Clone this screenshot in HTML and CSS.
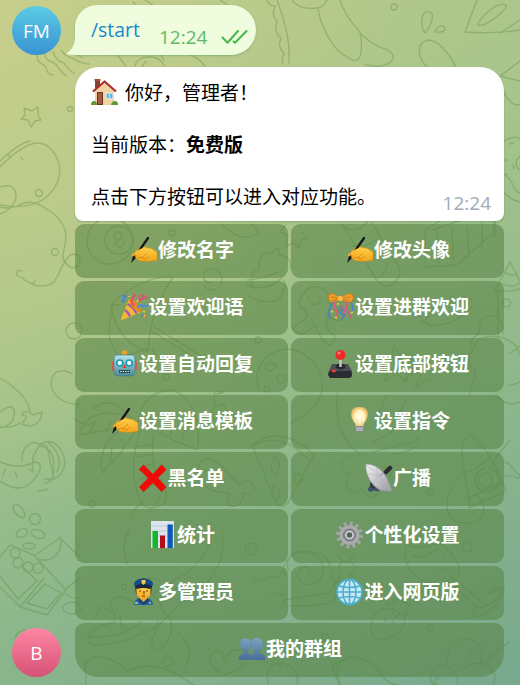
FILE: index.html
```html
<!DOCTYPE html>
<html lang="zh-CN">
<head>
<meta charset="utf-8">
<title>Chat</title>
<link rel="stylesheet" href="styles.css">
</head>
<body>
<svg width="0" height="0" class="defs" aria-hidden="true">
  <defs>
    <linearGradient id="skin" x1="0" y1="0" x2="0" y2="1"><stop offset="0" stop-color="#ffd04a"/><stop offset="1" stop-color="#f3a51c"/></linearGradient>
    <linearGradient id="steel" x1="0" y1="0" x2="1" y2="1"><stop offset="0" stop-color="#f4f4f6"/><stop offset="1" stop-color="#96979d"/></linearGradient>
    <linearGradient id="robotFace" x1="0" y1="0" x2="0" y2="1"><stop offset="0" stop-color="#b8e4ec"/><stop offset="1" stop-color="#4c8994"/></linearGradient>
    <linearGradient id="people" x1="0" y1="0" x2="0" y2="1"><stop offset="0" stop-color="#7ba4bf"/><stop offset="1" stop-color="#496b9b"/></linearGradient>
    <radialGradient id="glow"><stop offset="0" stop-color="#fffef2"/><stop offset=".6" stop-color="#fff2c0"/><stop offset="1" stop-color="#eebd62"/></radialGradient>
    <symbol id="writing" viewBox="0 0 28 28">
      <path fill="url(#skin)" stroke="#d88c16" stroke-width=".6" d="M3 18 9 12q3-2 6-1l4 1q3 0 5 2l3 2v8q-7 2-14 1-5 0-6-2l-5-3q-1-1 1-2z"/>
      <path fill="none" stroke="#cf8517" stroke-width=".8" d="m4 18 6-2 5-3m-8 9 6-1 4-4m-5 5 4 1 3-3"/>
      <path stroke="#17191a" stroke-width="2.3" stroke-linecap="round" d="M18 2 9 15"/><path stroke="#17191a" stroke-width="1.4" d="m9 15-5 6"/>
      <path fill="#17191a" d="m3 20-2 7 5-5z"/><path fill="url(#skin)" d="m4 18 6-5 4-1 2 2-6 4-4 3z"/>
    </symbol>
    <symbol id="party" viewBox="0 0 28 28">
      <path fill="#f7b735" d="M9 6q8 3 12 13L2 27q-1 0-1-1z"/>
      <path fill="none" stroke="#9d55ba" stroke-width="2.2" d="M7.500 11q6 3 9 9.500M5 17q3 2 5 6.200"/>
      <ellipse cx="15" cy="12.500" rx="3.200" ry="8.500" transform="rotate(-42 15 12.500)" fill="#e08b20"/>
      <path fill="none" stroke="#e84b70" stroke-width="2.2" d="M14 13q-4-5-1-8 3-3 0-4m6 8q1-3 3-3 2-1 2-4"/>
      <path fill="none" stroke="#4a8de5" stroke-width="2" d="M18 15q1-4 5-2 3 1 5-1M2 2l2 2-1 2 3 1"/>
      <path stroke="#e84b70" stroke-width="1.700" d="m20 2 2 1m3 3 3-2M25 23l1 2M20 6l-2-2"/>
      <path stroke="#f7c23c" stroke-width="1.700" d="m17 9 1-2m5 11 2 1m-1 5 1-2M9 3v1"/>
      <path stroke="#3974cc" stroke-width="1.500" d="m5 2 1 2m-4 4 2 1m18 13 1 1"/>
    </symbol>
    <symbol id="robot" viewBox="0 0 28 28">
      <path stroke="#a55022" stroke-width="2" d="M13.500 3v4"/><circle cx="13.500" cy="2.800" r="2.500" fill="#f2a127"/>
      <rect x="1" y="11" width="3" height="10" rx="1.400" fill="#d85b50"/><rect x="23" y="11" width="3" height="10" rx="1.400" fill="#d85b50"/>
      <path fill="url(#robotFace)" stroke="#487e88" stroke-width=".7" d="M6 5h15q3 0 3 3v14q0 4-4 4H7q-4 0-4-4V8q0-3 3-3z"/>
      <g fill="#f4ffff" stroke="#189cb7" stroke-width="1.700"><circle cx="8.800" cy="13" r="3"/><circle cx="18.200" cy="13" r="3"/></g>
      <path fill="#db3e36" d="m13.500 14 2 4h-4z"/><path stroke="#244d56" stroke-width="3" d="M8 21.500h11"/><path stroke="#d6eff0" stroke-width="1.200" stroke-dasharray="1.500 1" d="M9 21.500h9"/>
    </symbol>
    <symbol id="cross" viewBox="0 0 28 28"><path fill="#f00b0b" d="m4.500 .500 9.500 9.500 8.500-9.500 5 5-8.500 8.500 8.500 9-5 5-8.500-9-9.500 9-4.500-5 9-9-9-8.500z"/></symbol>
    <symbol id="chart" viewBox="0 0 28 28"><path fill="#dce4ec" d="M2 0h23v27H2z"/><path stroke="#b2bdca" stroke-width=".6" d="M2 5h23M2 10h23M2 15h23M2 20h23"/><path fill="#14b72c" d="M3.500 10H9v17H3.500z"/><path fill="#b40d19" d="M11 14.500h5V27h-5z"/><path fill="#0b57bd" d="M18.500 3.500h5.300V27h-5.300z"/></symbol>
    <symbol id="officer" viewBox="0 0 28 28">
      <path fill="#2462a3" d="M4 27q0-6 6-7h7q6 1 6 7z"/><path fill="#e9a922" d="M10 17h7v5l-3.500 3L10 22z"/><path fill="#174372" d="m9 20 4.500 4 4.500-4 1 3-5.500 4L8 23z"/>
      <path fill="#482d1a" d="M5 8h17l-1 8H6z"/><path fill="url(#skin)" d="M6.500 9h14v6q-1 6-7 6t-7-6z"/>
      <path fill="#174a86" d="M4 7q-1-5 9.500-7Q24 2 23 7l-2 3H6z"/><path fill="#17293e" d="M5 8q8-4 17 0l-2 3q-7-2-13 0z"/><path fill="#f3cd42" d="M11.500 2h4v3l-2 2-2-2z"/>
      <path fill="none" stroke="#573a1e" stroke-width="1.100" d="M9 13h2m5 0h2m-4 0v3m-2 2h3"/><path stroke="#f4c737" stroke-width="1.300" d="M5 25h3m12-1v2"/>
    </symbol>
    <symbol id="ribbons" viewBox="0 0 28 28">
      <path fill="none" stroke="#477fd6" stroke-width="1.800" d="M7 8q-7 8-4 18"/><path fill="none" stroke="#e0577d" stroke-width="1.700" d="M9 8q-4 6 0 9 3 3 0 8m10-18 1 9 4 9M15 12l-1 4 4 1-2 5"/>
      <path fill="none" stroke="#4c83cf" stroke-width="1.500" d="m12 14 4 3-3 3 5 2-3 4m8-18q4 5 2 12"/>
      <path fill="#ed9c28" stroke="#bd711c" stroke-width=".6" d="M13 5Q7-1 2 1q-2 5 1 8 6 1 10-3zm1 0q6-6 11-4 3 5-1 8-6 1-10-3z"/><path stroke="#c87922" stroke-width=".8" d="m4 4 8 1m3 0 8-1m-12 2-6 2m11-2 6 2"/><rect x="10.800" y="3" width="5" height="5" rx="1.800" fill="#ffb847"/>
      <path stroke="#f3cc43" stroke-width="1.500" d="m4 18 2 1m2 5 2 1m14-5 2-1M11 10v2"/>
    </symbol>
    <symbol id="joystick" viewBox="0 0 28 28"><path fill="#4b5057" d="M5 14h16l4 7v6H2v-6z"/><path fill="#292c31" d="M2 21h22l1 4-2 3H3l-2-3z"/><ellipse cx="13.500" cy="16.500" rx="5" ry="3" fill="#26292e"/><path stroke="#c5c7cb" stroke-width="2.400" d="M13.500 9v8"/><circle cx="13.500" cy="5" r="5" fill="#ed2825"/><circle cx="12" cy="3" r="1.500" fill="#ff8176"/><ellipse cx="6.800" cy="21" rx="2.400" ry="1.400" fill="#e33a35"/></symbol>
    <symbol id="bulb" viewBox="0 0 28 28"><path fill="url(#glow)" stroke="#e0b66d" stroke-width=".5" d="M13.500 0C2 0 5 12 9 16l1 4h7l1-4c4-4 7-16-4.500-16z"/><path fill="none" stroke="#f2cf8d" stroke-width=".7" d="m11 12 1 7m4-7-1 7"/><path fill="#858b91" d="M9.800 19h7.400v5l-2 2h-3.400l-2-2z"/><path stroke="#d0d4d8" d="M10 21h7m-7 2h7"/></symbol>
    <symbol id="dish" viewBox="0 0 28 28"><path fill="#30363e" d="m6 15 7 6v5H3l2-4z"/><ellipse cx="6" cy="25.500" rx="3" ry="2" fill="#40536c"/><ellipse cx="12" cy="25.500" rx="2.500" ry="2" fill="#40536c"/><path fill="url(#steel)" stroke="#92939a" stroke-width=".6" d="M1 0q18 0 26 27-14 2-21-9Q0 9 1 0z"/><path fill="none" stroke="#b4b5bb" stroke-width=".7" d="M2 2q13 7 23 24M3 10q11-2 17 14M12 4q2 10-4 15"/><path stroke="#a4a5a9" stroke-width="1.500" d="m14 12 9-6"/><path stroke="#2a2d32" stroke-width="4.500" stroke-linecap="round" d="m21 8 4-4"/></symbol>
    <symbol id="gear" viewBox="0 0 28 28"><circle cx="13.500" cy="14" r="11.500" fill="none" stroke="#a4a5aa" stroke-width="4" stroke-dasharray="2.800 3.221"/><circle cx="13.500" cy="14" r="7.800" fill="none" stroke="#a9aaae" stroke-width="4.600"/><circle cx="13.500" cy="14" r="6" fill="#8d8f94" stroke="#6f7176" stroke-width="1"/><circle cx="13.500" cy="14" r="3.500" fill="#566054" stroke="#d4d5d8" stroke-width="1.500"/></symbol>
    <symbol id="globe" viewBox="0 0 28 28"><circle cx="13.500" cy="14" r="12.600" fill="#c4e9f4" stroke="#4baccc" stroke-width="1.600"/><g fill="none" stroke="#4baccc" stroke-width="1.500"><ellipse cx="13.500" cy="14" rx="6.500" ry="12.500"/><path d="M13.500 1v26M1 14h25M3 8q10.500 3 21 0M3 20q10.500-3 21 0"/></g></symbol>
    <symbol id="users" viewBox="0 0 28 28"><g fill="url(#people)"><path d="M19 3q6 0 6 6 0 4-3 6v3l5 3 .5 4H12l1-5 3-2v-3q-3-2-3-6 0-6 6-6z"/><path stroke="#718c75" stroke-width=".5" d="M7.500 3q6 0 6 6 0 4-3 6v3l5 3 .5 4H.5L1 21l4-3v-3q-3-2-3-6 0-6 5.500-6z"/></g></symbol>
    <symbol id="house" viewBox="0 0 28 28"><path fill="#854234" d="M4 1h5v8H4z"/><path fill="#b44b3b" d="M3.500 0h6v2h-6z"/><path fill="#f0d3a0" d="m4 12 9-8 10 8v14H4z"/><path fill="none" stroke="#aa2f2b" stroke-width="2.300" stroke-linejoin="round" d="M2 12.500 13.500 2.500 25 12.500"/><path fill="#6c3527" d="M6 13h6v13H6z"/><path fill="#a45a3e" d="M7 14h4v11H7z"/><path fill="#67b6e3" stroke="#fff0cf" d="M15 14h7v6h-7z"/><path stroke="#e4eff4" stroke-width=".7" d="M18.500 14v6"/><path fill="#5f9930" d="M0 26q0-4 3-4t3 4zm20 0q1-4 4-4t3 4z"/></symbol>
  </defs>
</svg>
<svg class="doodles" viewBox="0 0 520 685" aria-hidden="true">
  <!-- upper left -->
  <path d="M37 55q0 7 5 9 4 1 5 7 2 4 6 4M44 53q2 8 8 9 5 2 7 7l7 7M53 52q3 9 11 11 3 6 10 10M61 50q5 7 14 9 4 4 14 5M72 52l11 6M117 54l10 14m8-2q2-9 14-9t15 9m-22 1 4-6m14-7 4 6m10-8q22 0 33 17m-74-67 5 5M145 0l8 5m67-5 8 5"/>
  <path d="m24 108 8 3 6-4 0 8 3 5-6 1-4 6-3-7-7-1 4-4zM0 161q19-18 30-20m-30 26q20-21 36-24 13-1 21 15 6 14-1 27-14 27-56 20m0-18q16-5 16 10-2 12-16 17M0 207q12 3 21-3 11-5 24 4 19 11 21 27 0 9-3 19-1 9 9 14 8-1 8-8-1-8-10-5c-15 16-9 32-31 31q-5 0-8-3m4-2q-2 4-4 2-7-2-9-6-6 0-5-4 0-4 5-2M21 157l2 3M8 154l3 4"/>
  <circle cx="70" cy="109" r="2.500"/><circle cx="39" cy="193" r="3.500"/><circle cx="55" cy="252" r="3.500"/>
  <!-- upper right -->
  <path d="M267 0q2 6 8 6m0 1q-4 8 2 14-4 11 4 17-4 9 3 15-3 7-1 10m-6-63q14 37 12 63M292 0q6 10 25 8 7-1 10-8m-9 8c2 16 14 43 31 50 13 9 14-9 11-26-11-12-17-21-20-32m20 33c13 13 24 16 28 17 9 6 6 14-8 16-6 1-9-1-15-1M425 33c-6-9-3-24 4-21 7 0 2 14-4 21zm10-1c10 1 12-3 8-6-4-2-8 5-8 6zm-8 35C416 56 417 42 429 40q14 2 27 27M477 0l-12 32q30 2 55-2M478 25c-1-5 20-25 28-20 3 4-22 23-28 20zm22 8 20-13M500 76l20-15m-20 15 20 5m-16 11q6 14 16 13"/>
  <circle cx="394" cy="7" r="3"/><path d="M504 141q10-6 16-2m-16 35q5 3 9 11 3 8 7 8m-16 0q7 7 16 9m0-46q-8 9 0 14M509 144l4-1m-8 17h2m6 5 1 4m-9 5h2M367 68l-3 8m73-8 16 8"/>
  <!-- left column -->
  <path d="M0 378q29 17 30 35m0 0c-7-4-9 2-8 2 9 2 2 4 0 9 11 5 19-1 20-12-9 3-7 4-12 1zM0 412q10-8 14-3 3 15-14 19m20-5q-7 5-20 4M72 374q-6-5-16-2-8 9-3 19 8 14 27 13"/>
  <path d="M0 462q18 8 35 0 8 1 4 10-11 20-27 15-7-2-12-6m5-12-2 7m12-4 2 5m12-8 3 2m-10-9c-1-20 15-23 20-16m-4 45q8-1 10-2m-15-17c-3-19 7-30 14-26l6 28q0 8-8 9m-7-37q11-8 19-1c13 14 8 29-3 34h-10m-3-33c16 4 13 21 12 32m-4-35q15 13 8 29"/>
  <ellipse cx="19" cy="511" rx="4" ry="8" transform="rotate(-38 19 511)"/><circle cx="35" cy="519" r="5.500"/><ellipse cx="22" cy="533" rx="6" ry="4" transform="rotate(-24 22 533)"/><ellipse cx="38" cy="534" rx="7" ry="4" transform="rotate(18 38 534)"/><ellipse cx="29" cy="546" rx="6" ry="3"/>
  <circle cx="15" cy="553" r="5"/><circle cx="18" cy="563" r="5"/><circle cx="28" cy="567" r="5"/><circle cx="38" cy="568" r="5"/>
  <path d="m0 557 10-12 24 10 32 35-19 25-27-8-20-20m0-11 18 23 19-18-16-16m23 13-24 29m7-4 18-19 16 9-14 16zm7-47 26-18 20 19M36 558q13 6 21-4 6-8 3-17m6 52q10-9 14-10m-15 15q6 4 15 4"/><ellipse cx="72" cy="608" rx="9" ry="6"/>
  <path d="M25 630q-8 1-10 8"/>
  <!-- first rows -->
  <circle cx="110" cy="241" r="23"/><circle cx="119" cy="240" r="14"/><circle cx="118" cy="236" r="4"/><circle cx="120" cy="243" r="4"/><circle cx="172" cy="233" r="3"/><path d="M222 224q19 20 36 10 2-4-7-10m35 0-6 8 8 4-2 10 8-3 5 6 2-9 7-2-6-5M211 283q-10-1-7-10 5-7 14-2 8 9 1 16-10 7-15-2M111 304q33-29 62-27-13 20-21 46-3 14-4 28-28-7-36-40zm2 0-3 18q-4 21 10 35l28-8m6-22 59 36m-60-31 55 34M113 304l6 1m33 43 3 7m98-68q-5-13 6-19-1-17 14-15l3-5 3 2v5q14 2 11 13M247 280q14-1 32-8m-32 14q24 6 36-10m-35 19q12 10 31 5 8-13 5-20"/>
  <circle cx="74" cy="331" r="8"/><circle cx="258" cy="340" r="3"/><circle cx="166" cy="377" r="3"/><path d="M291 349q26 8 31 31 4 26-31 43M259 391c-8-24 8-42 32-42m-19 15q-6-4-6 4 3 6 8 1 5-6-2-5zm10 12q-5-3-5 4 4 6 8 0 2-5-3-4zm-14 11q-4-2-4 3 3 4 6 0 1-3-2-3z"/>
  <path d="m343 225 34 56q11 11 20-2 5-3 2-12l-29-47m-28 5q14 12 27-5m-17 26q13 3 25-7m10 25q-1 12-12 15m50-49 25-15 45-1-2 19-36 32-32 2zm7 0 36-12 23 1m-54 11 2 33m13-34 1 31m14-33 2 31m13-35v25m13-31v20M305 293c6-12 27-6 23 9l12 9q7 7-1 10l-12-4q-4 11 8 19 0 8-7 9-11-11-13-20l-10 8q-10 3-12-5l14-11-1-7q-13-4-3-15zm4 3v3m10-4v4m-8 5q7 2 10-4m-10 18 3 4m14-12-1 4M422 321l10 5q25-2 40-19m-48 15 14-20 34-3M394 345l6 11 13 1-9 9 4 15-12-7-11 8 3-14-9-9 13-2zM495 290l15-28 10 19m-25 9q11 3 25-1m-20-6q11 6 20 0m-15-10q9 4 12 0m-19 19v42M506 299a4 4 0 1 0 1 0M479 334c-1-25 26-24 24 0m-24 0q-12 6-6 17m1-3c4-20 44-12 45 6M473 351c-9 8-2 18 2 18 1 16-7 20-5 26m39-41q11-8 11-8m-11 40 11-4"/>
  <!-- palm, fish, melon -->
  <path d="M80 435q7-31 52-18m-52 18 56-10q-23-34-43-16m-4 24 6-9m11 8 5-10m17 4q-31 14-26 47l18-19 15-23m-23 16-2 17m11-25 3 9m14-27q6-31 35-31 29 12 25 60l-25-10-33-18m47 1-5 18m-8-23-4 18m-29-7q-9 24-7 47 4 28 12 31 10 3 19-5 4-9-4-18-12-20-7-52m-17 15 16-3m-16 13 16-3m-14 14 16-5m-14 16 17-7m-13 18 17-10m-18 21q-12 8-13 17m29-21-10 15m23-27q12-4 15 0M220 392q-9-3-4 13l-3 5q-3 10 6 11 10-2 7-12l-2-5m-7-10 7-2m-6 14 7-3M199 475c-5-19 14-24 28-2l13 12c3-7 14-5 14 5-5 8-11-1-11 6q-3 14-15 9l1-12q-26 0-30-18zm7-5v1m7 2 1 8M252 445q30-22 62 10l-26 48q-6 6-11 1zm0 1q28-16 55 12m-33-1q10 7 1 17-7-5-1-17zm0 28q11 8 2 16-7-7-2-16zm21-11q10-2 6 9-9 2-6-9z"/>
  <circle cx="92" cy="504" r="3"/><path d="M75 419q12 10 21 2M129 530q-9 13-2 34M222 530q5 28-14 52-14 8-45 39-8 9-27 15-13 7-31 8c-28 6-20-17 10-22 2-12-7-15-5-19 7-14 23-1 25 1l21-12 22-14q32-18 34-48M91 637q31 2 51-16m11-25q7 2 9 13l8 10c7 16-11 38-18 29-2-15 10-20 5-27m-62-3q5-18 16-5m9 3 1 11 8 2m30-49q-14-6-23 7"/><circle cx="251" cy="549" r="6"/><circle cx="124" cy="587" r="2.500"/><circle cx="168" cy="661" r="5"/><path d="M178 633q18 15 7 35M254 583c6-10 8 2 12-4 5-7 8 2 14-3m-7 19c5-6 7 3 12-1m-61 81q-22-12-10-23 8-5 10 9 9-17 20-9 11 12-20 23zM86 685v-10q-4-12 8-18 19-1 33 14 20-10 44 0l23 14"/>
  <!-- head, rocket, snail and ice cream -->
  <path d="M338 390q-7 43 24 66m-7 0c-17-3-17 19-4 17-12 15 3 26 11 15 5 17 22 7 15-2 15 0 19-18 6-19m-10-15 40-10q7-8 6-2-2 12-27 14m-18-29c19-1 38-26 30-25m-26 15 9-20m-14 47 13-6q11-6 12-17M470 508l-8-53q-1-13 8-21 22 17 36 57l-37 17zm-8-35q14-2 27-15m-22 41 34-17m-16-9a7 7 0 1 0 1 0m-1-5a12 12 0 1 0 4 0m-35 18c-9 6-10 28 1 35 21 8 35-6 26-22l-6-4m26-17c13-7 17 5 19-2-7-6-9-13-15-14m-13 0 18-22m-27 49 17-4"/>
  <circle cx="430" cy="492" r="3"/><circle cx="467" cy="547" r="5"/><path d="M285 576c-10-26 40-34 45-10l6 23q2 12-10 15-47 6-43-4l46-7 12-18q-4-9 0-12 8-4 14 3-1 7-6 10m-6-14-6-8m12 8 5-8m-66 16c-6-24 31-25 35-4 3 24-28 23-25 7 7-13 17-2 9 1M406 546c-5 31 22 40 42 37q15-5 10-19-14-25-42-34m-8 15q16 6 36-4m-32 15q12 4 27-8m-2 12 1 3m5-10 2 2m-8 15-3 2m10-3 3 1m-3 8 34 30m-29-33 34 28m4-9c12-9 22-10 15 0-8 22-37 31-27 14 12 0 25-8 27-19zM371 625c3-19 17-18 26-14l8 6c0 23-37 33-34 8zm20-15-6-6 9-1 4-8 5 7 8 2-7 7 5 5-9-3-4 5zm-7 9 2 3m7-2 1 4m-9 7 2 1"/>
  <circle cx="430" cy="628" r="3"/><circle cx="325" cy="637" r="3"/><path d="M341 685c-10-20 2-29 14-28 28 4 24 28 43 28m-52-26-14 6 7 20m7-19v1M447 666c-2-23 12-28 23-27 13 3 15 19 8 28m-44 18c-9-11-1-20 11-19 14 2 14 20 11 19m6-16c17-14 40 0 31 16m-3-28 19-15m-24 22 8-10m-23-3 3 4m-34 24q-5-3-4 5 7 3 6 5"/>
  <path d="M268 685q-4-22 13-22 20 4 16 22m-16-18-2-3"/>
  <path d="M496 395q12 13 24 7M404 381c5-7 17-15 18-8l-7 14 15-8m-16-9 8 1"/>
</svg>
<main class="chat">
  <section class="message-row outgoing">
    <div class="avatar avatar-fm">FM</div>
    <div class="bubble command">
      <svg class="tail" viewBox="0 0 18 24" aria-hidden="true"><path d="M9 0v8Q8 18 0 23q3 1 18 1z"/></svg>
      <span class="command-name">/start</span>
      <span class="time sent">12:24</span>
      <svg class="checks" viewBox="0 0 28 16" aria-hidden="true"><path d="m1.500 8.500 5 5.200L17 2m-4.500 10.500 1.500 1.200L25.500 2"/></svg>
    </div>
  </section>
  <section class="message-row incoming">
    <div class="avatar avatar-b">B</div>
    <div class="response">
      <article class="bubble welcome">
        <p><svg class="emoji"><use href="#house"/></svg><span class="greeting">你好，管理者！</span></p>
        <p>当前版本：<strong>免费版</strong></p>
        <p>点击下方按钮可以进入对应功能。</p>
        <span class="time received">12:24</span>
      </article>
      <div class="keyboard">
        <button><svg class="emoji"><use href="#writing"/></svg><span>修改名字</span></button>
        <button><svg class="emoji"><use href="#writing"/></svg><span>修改头像</span></button>
        <button><svg class="emoji"><use href="#party"/></svg><span>设置欢迎语</span></button>
        <button><svg class="emoji"><use href="#ribbons"/></svg><span>设置进群欢迎</span></button>
        <button><svg class="emoji"><use href="#robot"/></svg><span>设置自动回复</span></button>
        <button><svg class="emoji"><use href="#joystick"/></svg><span>设置底部按钮</span></button>
        <button><svg class="emoji"><use href="#writing"/></svg><span>设置消息模板</span></button>
        <button><svg class="emoji"><use href="#bulb"/></svg><span>设置指令</span></button>
        <button><svg class="emoji"><use href="#cross"/></svg><span>黑名单</span></button>
        <button><svg class="emoji"><use href="#dish"/></svg><span>广播</span></button>
        <button><svg class="emoji"><use href="#chart"/></svg><span>统计</span></button>
        <button><svg class="emoji"><use href="#gear"/></svg><span>个性化设置</span></button>
        <button><svg class="emoji"><use href="#officer"/></svg><span>多管理员</span></button>
        <button><svg class="emoji"><use href="#globe"/></svg><span>进入网页版</span></button>
        <button class="wide"><svg class="emoji"><use href="#users"/></svg><span>我的群组</span></button>
      </div>
    </div>
  </section>
</main>
</body>
</html>
```
FILE: styles.css
```css
* { box-sizing: border-box; }
body {
  margin: 0;
  width: 520px;
  height: 685px;
  overflow: hidden;
  position: relative;
  background:
    radial-gradient(ellipse 420px 520px at 0 0, rgba(202, 208, 138, .8), rgba(202, 208, 138, 0)),
    linear-gradient(155deg, #b9c98a 0%, #a8c58b 35%, #8fb88b 65%, #78a98e 100%);
  font: 19px/26px "Open Sans", "Noto Sans CJK SC", sans-serif;
  color: #000;
}
.defs { position: absolute; }
.doodles {
  position: absolute;
  inset: 0;
  width: 520px;
  height: 685px;
  fill: none;
  stroke: rgb(88, 137, 57);
  stroke-width: 1.4;
  stroke-linecap: round;
  stroke-linejoin: round;
  opacity: .34;
}
.chat {
  position: relative;
  height: 685px;
  padding: 5px 16px 8px 12px;
  display: flex;
  flex-direction: column;
  gap: 12px;
}
.message-row { display: flex; gap: 14px; }
.avatar {
  width: 49px;
  height: 49px;
  flex: none;
  border-radius: 50%;
  display: grid;
  place-items: center;
  color: #fff;
  font-weight: 500;
  font-size: 19px;
}
.outgoing .avatar { margin-top: 1px; }
.avatar-fm { background: linear-gradient(#5acbe3, #3993d4); }
.avatar-b { align-self: flex-end; background: linear-gradient(#ff86a5, #d65275); }
.bubble { position: relative; }
.command {
  width: 181px;
  height: 50px;
  padding-left: 16px;
  display: flex;
  align-items: center;
  background: #effdde;
  border-radius: 22px 25px 25px 0;
  box-shadow: 0 1px 2px rgba(90, 160, 100, .5);
}
.tail { position: absolute; left: -9px; bottom: 0; width: 18px; height: 24px; fill: #effdde; }
.command-name { color: #168acd; width: 68px; font-size: 19.4px; }
.time { font-size: 19px; line-height: 24px; }
.sent { color: #62b866; margin-top: 13px; }
.checks {
  width: 28px;
  height: 16px;
  margin: 14px 0 0 14px;
  fill: none;
  stroke: #4fb64e;
  stroke-width: 2.1;
  stroke-linecap: round;
  stroke-linejoin: round;
}
.response { width: 429px; display: grid; gap: 3px; }
.welcome {
  height: 154px;
  padding: 13px 16px 11px;
  background: #fff;
  border-radius: 24px 24px 8px 8px;
  box-shadow: 0 1px 2px rgba(70, 110, 60, .35);
}
.welcome p { margin: 0 0 26px; height: 26px; display: flex; align-items: center; }
.greeting { margin-left: 6px; }
.received { position: absolute; right: 13px; bottom: 6px; color: #a0acb6; }
.emoji { width: 28px; height: 28px; flex: none; }
.keyboard { display: grid; grid-template-columns: 1fr 1fr; gap: 3px; }
button {
  height: 54px;
  padding: 0 0 2px 1px;
  border: 0;
  border-radius: 9px;
  background: rgba(87, 131, 68, .56);
  display: flex;
  align-items: center;
  justify-content: center;
  color: #fff;
  font: 700 19px/26px "Open Sans", "Noto Sans CJK SC", sans-serif;
}
.wide { grid-column: 1 / -1; border-radius: 9px 9px 24px 24px; }
```
